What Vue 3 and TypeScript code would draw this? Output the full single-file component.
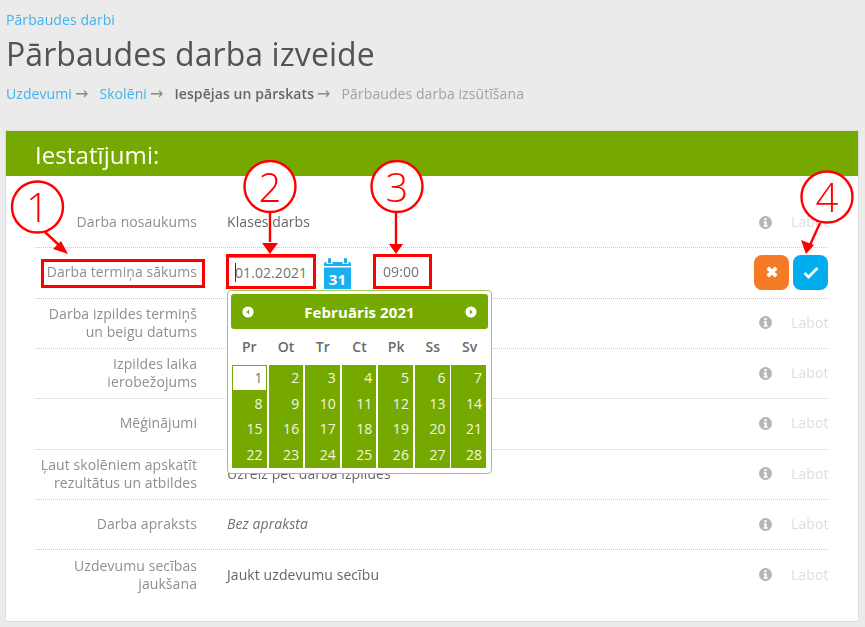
<script setup lang="ts">
// Test settings step, with the date picker open and numbered callouts on top.
interface Row {
  label: string[];
  value: string;
  italic?: boolean;
}

const rows: Row[] = [
  { label: ["Darba nosaukums"], value: "Klases darbs" },
  { label: ["Darba termiņa sākums"], value: "" },
  { label: ["Darba izpildes termiņš", "un beigu datums"], value: "" },
  { label: ["Izpildes laika", "ierobežojums"], value: "" },
  { label: ["Mēģinājumi"], value: "" },
  { label: ["Ļaut skolēniem apskatīt", "rezultātus un atbildes"], value: "Uzreiz pēc darba izpildes" },
  { label: ["Darba apraksts"], value: "Bez apraksta", italic: true },
  { label: ["Uzdevumu secības", "jaukšana"], value: "Jaukt uzdevumu secību" },
];

const weekdays = ["Pr", "Ot", "Tr", "Ct", "Pk", "Ss", "Sv"];
const days = Array.from({ length: 28 }, (_, i) => i + 1);
</script>

<template>
  <div class="page">
    <a class="back">Pārbaudes darbi</a>
    <h1>Pārbaudes darba izveide</h1>
    <div class="steps">
      <a>Uzdevumi</a><span class="arrow">→</span>
      <a>Skolēni</a><span class="arrow">→</span>
      <b>Iespējas un pārskats</b><span class="arrow">→</span>
      <span class="todo">Pārbaudes darba izsūtīšana</span>
    </div>

    <section class="card">
      <header>Iestatījumi:</header>
      <div class="rows">
        <div v-for="(row, i) in rows" :key="i" class="row">
          <div class="label">
            <div v-for="line in row.label" :key="line">{{ line }}</div>
          </div>
          <div v-if="i === 1" class="value editing">
            <div class="input date"><i class="caret" />01.02.2021</div>
            <svg class="cal" width="27" height="32" viewBox="0 0 27 32">
              <path fill="#1ab0ef" d="M0 8V5.5Q0 4 1.5 4h24Q27 4 27 5.5V8z" />
              <g fill="#fff">
                <rect x="2.5" y="2.5" width="6" height="3.5" />
                <rect x="18.5" y="2.5" width="6" height="3.5" />
              </g>
              <g fill="#1ab0ef">
                <rect x="4" y="0" width="3" height="5.5" rx="1.2" />
                <rect x="20" y="0" width="3" height="5.5" rx="1.2" />
                <rect x="0" y="9.5" width="27" height="21.5" />
              </g>
              <text x="13.5" y="27" text-anchor="middle" class="cal-num">31</text>
            </svg>
            <div class="input time">09:00</div>
          </div>
          <div v-else class="value" :class="{ italic: row.italic }">{{ row.value }}</div>
          <div v-if="i === 1" class="actions">
            <button class="btn cancel">
              <svg width="14" height="14" viewBox="0 0 14 14"><path d="M2.8 2.8l8.4 8.4M11.2 2.8l-8.4 8.4" stroke="#fff" stroke-width="3.8" /></svg>
            </button>
            <button class="btn ok">
              <svg width="16" height="13" viewBox="0 0 16 13"><path d="M1.5 7l4 4 9-9" fill="none" stroke="#fff" stroke-width="2.8" /></svg>
            </button>
          </div>
          <div v-else class="actions">
            <svg class="info" width="13" height="13" viewBox="0 0 13 13">
              <circle cx="6.5" cy="6.5" r="6.5" fill="#b5b5b5" />
              <rect x="5.3" y="2.2" width="2.4" height="2" fill="#fff" />
              <path d="M4.7 5.3h3v4h1v1.4H4.6V9.3h1V6.7h-.9z" fill="#fff" />
            </svg>
            <span class="edit">Labot</span>
          </div>
        </div>
      </div>
    </section>

    <div class="picker">
      <div class="picker-head">
        <svg width="12" height="12" viewBox="0 0 12 12"><circle cx="6" cy="6" r="5.6" fill="#fff" /><path d="M7.2 3.4L4.4 6l2.8 2.6z" fill="#76a900" /></svg>
        <span>Februāris 2021</span>
        <svg width="12" height="12" viewBox="0 0 12 12"><circle cx="6" cy="6" r="5.6" fill="#fff" /><path d="M4.8 3.4L7.6 6 4.8 8.6z" fill="#76a900" /></svg>
      </div>
      <div class="weekdays">
        <span v-for="d in weekdays" :key="d">{{ d }}</span>
      </div>
      <div class="days">
        <span v-for="d in days" :key="d" :class="{ today: d === 1 }">{{ d }}</span>
      </div>
    </div>

    <div class="mark m1" />
    <div class="mark m2" />
    <div class="mark m3" />

    <svg class="notes" width="865" height="627" viewBox="0 0 865 627">
      <g fill="#fff" stroke="#f00" stroke-width="2.4">
        <circle cx="37.5" cy="207" r="25.5" />
        <circle cx="270" cy="186.5" r="25.5" />
        <circle cx="397" cy="186.5" r="25.5" />
        <circle cx="827" cy="197" r="25.5" />
      </g>
      <g class="num">
        <text x="37.5" y="222">1</text>
        <text x="270" y="201.5">2</text>
        <text x="397" y="201.5">3</text>
        <text x="827" y="212">4</text>
      </g>
      <g stroke="#f00" stroke-width="2.4" fill="none">
        <path d="M45 232l16 15" />
        <path d="M270 212v30" />
        <path d="M396 212v32" />
        <path d="M820 223l-10 22" />
      </g>
      <g fill="#f00">
        <path d="M68 254l-15-5 8-8z" />
        <path d="M262 243h16l-8 11z" />
        <path d="M389 244h14l-7 10z" />
        <path d="M806 254l-5-14 13 5z" />
      </g>
    </svg>
  </div>
</template>

<style>
html,
body {
  margin: 0;
  background: #ebebeb;
}
</style>

<style scoped>
.page {
  position: relative;
  width: 865px;
  height: 627px;
  overflow: hidden;
  box-sizing: border-box;
  padding: 11px 7px 0 6px;
  font: 14px/18px "Open Sans", sans-serif;
  letter-spacing: 0.08px;
  color: #666;
  /* the reference is a slightly soft, upscaled capture */
  filter: blur(0.4px);
}

a {
  color: #3fb4ee;
}

.back {
  display: block;
}

h1 {
  margin: 3px 0 0;
  font: 400 32px/43px "Open Sans", sans-serif;
  color: #55534f;
}

.steps {
  margin-top: 10px;
  white-space: nowrap;
}
.steps b {
  font-weight: 600;
}
.arrow {
  font-family: "DejaVu Sans", sans-serif;
  font-size: 16px;
  color: #8a8a8a;
  margin: 0 11px 0 3px;
}
.todo {
  color: #a2a2a2;
}

.card {
  margin-top: 28px;
  height: 490px;
  background: #fff;
  box-shadow: 0 0 0 1px #dcdcdc;
}

.card header {
  height: 45px;
  box-sizing: border-box;
  padding-left: 29px;
  background: #76a900;
  color: #fff;
  font-size: 24px;
  line-height: 47px;
}

.rows {
  padding: 22px 30px 0 29px;
}

.row {
  display: flex;
  align-items: center;
  height: 50.33px;
  box-sizing: border-box;
  padding-bottom: 1px;
  border-bottom: 1px dotted #c8c8c8;
}
.row:last-child {
  border-bottom: 0;
}

.label {
  width: 162px;
  flex: none;
  text-align: right;
  color: #8f8f8f;
}

.value {
  margin-left: 30px;
  flex: 1;
}
.italic {
  font-style: italic;
  color: #707070;
}

.editing {
  display: flex;
  align-items: center;
}

.input {
  box-sizing: border-box;
  height: 30px;
  background: #fff;
  color: #737373;
  line-height: 30px;
}
.date {
  position: relative;
  width: 85px;
  padding-left: 7px;
  border-top: 1px solid #3fb4ee;
  margin-left: 1px;
}
.caret {
  position: absolute;
  left: 7px;
  top: 5px;
  width: 1px;
  height: 19px;
  background: #333;
}
.cal {
  margin: 0 0 -3px 11px;
  flex: none;
}
.cal-num {
  font: 700 15px "Open Sans", sans-serif;
  fill: #fff;
}
.time {
  margin-left: 32px;
}

.actions {
  display: flex;
  align-items: center;
  flex: none;
  width: 75px;
  justify-content: flex-end;
}
.info {
  margin-right: 19px;
}
.edit {
  color: #dedede;
  width: 37px;
}

.btn {
  width: 35px;
  height: 35px;
  padding: 0;
  border: 0;
  border-radius: 8px;
  display: flex;
  align-items: center;
  justify-content: center;
}
.cancel {
  background: #f57a25;
  margin-right: 4px;
}
.ok {
  background: #00aeef;
}

.picker {
  position: absolute;
  left: 227px;
  top: 290px;
  width: 265px;
  height: 184px;
  box-sizing: border-box;
  padding: 3px;
  background: #fff;
  border: 1px solid #a6c95c;
  border-radius: 4px;
}
.picker-head {
  height: 35px;
  box-sizing: border-box;
  padding: 0 11px;
  display: flex;
  align-items: center;
  justify-content: space-between;
  background: #76a900;
  border-radius: 3px;
  color: #fff;
  font-size: 15px;
  font-weight: 700;
}
.weekdays {
  display: grid;
  grid-template-columns: repeat(7, 1fr);
  padding-top: 9px;
  height: 27px;
  text-align: center;
  font-weight: 600;
  color: #6a6a6a;
}
.days {
  display: grid;
  grid-template-columns: repeat(7, 34.7px);
  column-gap: 1.9px;
  margin-left: 1px;
}
.days span {
  height: 25.7px;
  box-sizing: border-box;
  padding-right: 4px;
  background: #76a900;
  color: #f2f5e6;
  text-align: right;
  line-height: 26px;
}
.days .today {
  background: #fff;
  border: 1px solid #76a900;
  color: #777;
  line-height: 24px;
  padding-right: 3px;
}

.mark {
  position: absolute;
  box-sizing: border-box;
  border: 3px solid #f00;
}
.m1 {
  left: 41px;
  top: 259px;
  width: 164px;
  height: 29px;
}
.m2 {
  left: 226px;
  top: 254px;
  width: 90px;
  height: 35px;
}
.m3 {
  left: 373px;
  top: 254px;
  width: 59px;
  height: 35px;
}

.notes {
  position: absolute;
  left: 0;
  top: 0;
  pointer-events: none;
}
.num text {
  font: 300 40px "Open Sans", sans-serif;
  fill: #f00;
  text-anchor: middle;
}
</style>
